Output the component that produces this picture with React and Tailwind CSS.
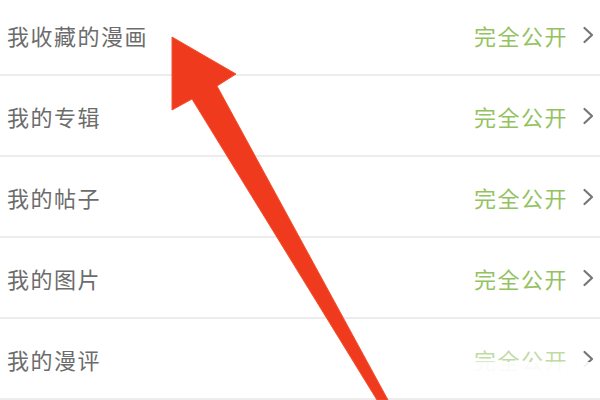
import React from "react";

const rows = ["我收藏的漫画", "我的专辑", "我的帖子", "我的图片", "我的漫评"];

const Chevron = () => (
  <svg width="12" height="18" viewBox="0 0 12 18" className="shrink-0">
    <path d="M2.5 2 L10 9 L2.5 16" fill="none" stroke="#767676" strokeWidth="2.2" strokeLinecap="round" strokeLinejoin="round" />
  </svg>
);

const App = () => {
  return (
    <div
      className="relative w-[600px] h-[400px] overflow-hidden bg-white"
      style={{ fontFamily: '"Noto Sans CJK SC", "Noto Sans", sans-serif' }}
    >
      {/* Settings list */}
      <div className="-mt-[5px]">
        {rows.map((label, i) => (
          <div
            key={label}
            className="h-[81px] flex items-center justify-between pl-[7px] pr-[6px] border-b-2 border-[#ececec]"
          >
            <span className="text-[22px] leading-none text-[#6c6c6c] tracking-[1.5px]">{label}</span>
            <div className="flex items-center gap-[14px]">
              <span
                className={
                  i === rows.length - 1
                    ? "text-[22px] leading-none text-[#a9cc80] tracking-[1.5px] opacity-70"
                    : "text-[22px] leading-none text-[#93c25f] tracking-[1.5px]"
                }
              >
                完全公开
              </span>
              <Chevron />
            </div>
          </div>
        ))}
      </div>

      {/* faded watermark strip over the last row */}
      <div className="absolute left-[440px] top-[362px] w-[160px] h-[26px] bg-white/90" />

      {/* Red arrow overlay */}
      <svg className="absolute inset-0" width="600" height="400" viewBox="0 0 600 400">
        <polygon
          points="172,37 236,74 217,86 388,400 377,400 192,99 172,110"
          fill="#ef3a1d"
          stroke="#f4502f"
          strokeWidth="1"
          strokeLinejoin="round"
        />
      </svg>
    </div>
  );
};

export default App;
